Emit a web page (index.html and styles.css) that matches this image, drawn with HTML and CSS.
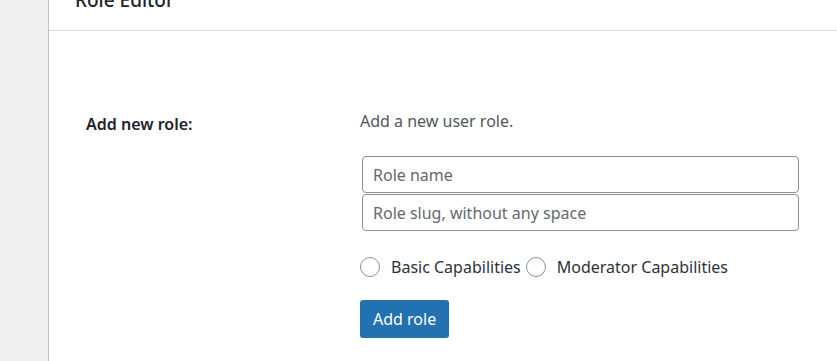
FILE: index.html
```html
<!DOCTYPE html>
<html>
<head>
    <title>Role Editor</title>
    <link rel="stylesheet" href="styles.css">
</head>
<body>
    <div class="layout">
        <div class="sidebar"></div>
        <div class="main">
            <div class="page-header">
                <h2>Role Editor</h2>
            </div>

            <div class="form-row">
                <div class="form-label">Add new role:</div>
                <div class="form-field">
                    <p class="description">Add a new user role.</p>
                    <div class="inputs">
                        <input type="text" placeholder="Role name">
                        <input type="text" placeholder="Role slug, without any space">
                    </div>
                    <div class="radios">
                        <label class="radio"><span class="circle"></span>Basic Capabilities</label>
                        <label class="radio"><span class="circle"></span>Moderator Capabilities</label>
                    </div>
                    <button class="button primary">Add role</button>
                </div>
            </div>
        </div>
    </div>
</body>
</html>
```

FILE: styles.css
```css
body {
    margin: 0;
    font-family: "Noto Sans", "Open Sans", sans-serif;
    font-size: 16px;
    color: #1d2327;
    background: #ffffff;
}
.layout {
    display: flex;
    min-height: 361px;
}
.sidebar {
    width: 48px;
    background: #f0f0f1;
    border-right: 1px solid #c3c4c7;
}
.main {
    flex: 1;
    background: #ffffff;
}
.page-header {
    height: 30px;
    border-bottom: 1px solid #dcdcde;
    padding-left: 26px;
    overflow: hidden;
}
.page-header h2 {
    margin: -15px 0 0 0;
    font-size: 19px;
    font-weight: 500;
    line-height: 30px;
}
.form-row {
    display: flex;
    padding: 77px 0 0 37px;
}
.form-label {
    width: 274px;
    font-weight: 600;
    line-height: 22px;
    padding-top: 5px;
}
.form-field {
    width: 439px;
}
.description {
    margin: 0;
    color: #50575e;
    line-height: 22px;
    padding-top: 2px;
}
.inputs {
    margin-top: 24px;
    padding-left: 2px;
}
.inputs input {
    display: block;
    box-sizing: border-box;
    width: 437px;
    height: 37px;
    margin: 0 0 1px 0;
    padding: 0 10px;
    border: 1px solid #8c8f94;
    border-radius: 4px;
    font-family: inherit;
    font-size: 16px;
    color: #2c3338;
}
.inputs input::placeholder {
    color: #646970;
}
.radios {
    display: flex;
    margin-top: 25px;
    line-height: 22px;
}
.radio {
    display: flex;
    align-items: center;
    color: #2c3338;
}
.circle {
    width: 20px;
    height: 20px;
    box-sizing: border-box;
    border: 1px solid #8c8f94;
    border-radius: 50%;
    margin-right: 11px;
}
.radio + .radio .circle {
    margin-left: 5px;
}
.button {
    display: block;
    margin-top: 22px;
    height: 38px;
    padding: 0 13px;
    border: none;
    border-radius: 3px;
    font-family: inherit;
    font-size: 16px;
}
.primary {
    background: #2271b1;
    color: #ffffff;
}
```
